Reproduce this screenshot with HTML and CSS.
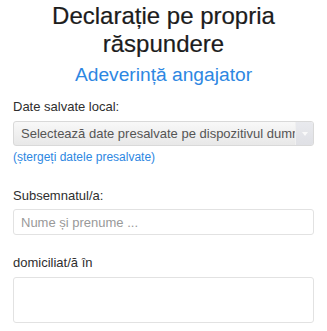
FILE: index.html
```html
<!DOCTYPE html>
<html lang="ro">
<head>
<meta charset="utf-8">
<link rel="stylesheet" href="styles.css">
</head>
<body>
<div class="page">
  <h1 class="title">Declarație pe propria răspundere</h1>
  <h2 class="subtitle">Adeverință angajator</h2>

  <div class="field field-first">
    <label class="label label-select">Date salvate local:</label>
    <div class="select">
      <span class="select-text">Selectează date presalvate pe dispozitivul dumneavoastră</span>
      <span class="select-arrow"><svg width="6" height="4" viewBox="0 0 6 4"><path d="M0 0H6L3 4Z" fill="#fafafa"/></svg></span>
    </div>
    <a class="clear-link">(ștergeți datele presalvate)</a>
  </div>

  <div class="field field-name">
    <label class="label label-input">Subsemnatul/a:</label>
    <div class="input"><span class="placeholder">Nume și prenume ...</span></div>
  </div>

  <div class="field field-address">
    <label class="label label-select">domiciliat/ă în</label>
    <div class="textarea"></div>
  </div>
</div>
</body>
</html>
```
FILE: styles.css
```css
html, body {
  margin: 0;
  padding: 0;
  background: #ffffff;
}
body {
  font-family: "Liberation Sans", Arial, sans-serif;
  color: #333;
}
.page {
  padding: 0 13px;
}
.title {
  margin: 0;
  padding: 2px 30px 0 30px;
  font-size: 24px;
  font-weight: normal;
  line-height: 28px;
  color: #1c1c1c;
  text-align: center;
  -webkit-text-stroke: 0.2px #1c1c1c;
}
.subtitle {
  margin: 5px 0 0 0;
  font-size: 19.2px;
  font-weight: normal;
  line-height: 24px;
  color: #2d87e2;
  text-align: center;
}
.field {
  display: flex;
  flex-direction: column;
}
.field-first { margin-top: 12px; }
.field-name { margin-top: 24px; }
.field-address { margin-top: 20px; }
.label {
  font-size: 13px;
  line-height: 16px;
  color: #2e2e2e;
}
.label-select { margin-bottom: 6px; }
.label-input { margin-bottom: 5px; }
.select {
  box-sizing: border-box;
  display: flex;
  height: 25px;
  border: 1px solid #d9d9d9;
  border-radius: 3px;
  background: linear-gradient(#f8f8f8, #e8e8e8);
  overflow: hidden;
}
.select-text {
  flex: 1;
  padding-left: 7px;
  font-size: 13px;
  line-height: 23px;
  color: #555;
  white-space: nowrap;
  overflow: hidden;
}
.select-arrow {
  width: 17px;
  display: flex;
  align-items: center;
  justify-content: center;
  background: linear-gradient(#e9eaee, #dfe0e5);
  border-left: 1px solid #f0f0f0;
}
.clear-link {
  margin-top: 4px;
  font-size: 12px;
  line-height: 14px;
  color: #2d87e2;
}
.input {
  box-sizing: border-box;
  height: 26px;
  border: 1px solid #e2e2e2;
  border-radius: 3px;
  display: flex;
  align-items: center;
  padding-left: 7px;
}
.placeholder {
  font-size: 13px;
  color: #999;
}
.textarea {
  box-sizing: border-box;
  height: 46px;
  border: 1px solid #e2e2e2;
  border-radius: 3px;
}
```
